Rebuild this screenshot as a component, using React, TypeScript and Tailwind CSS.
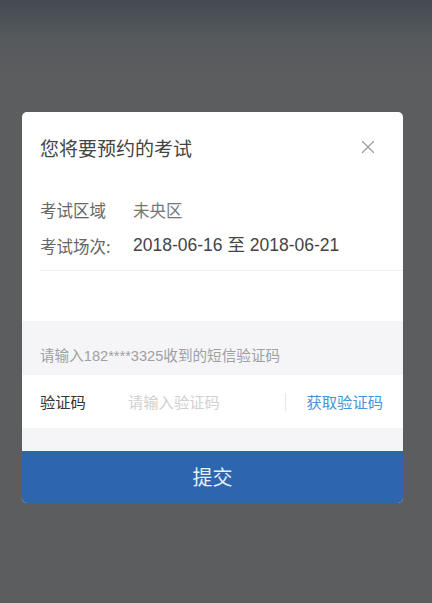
import { X } from "lucide-react";

const font = { fontFamily: '"Noto Sans CJK SC", "Noto Sans", sans-serif' };
const latin = { fontFamily: '"Liberation Sans", "Noto Sans CJK SC", sans-serif' };

export default function App() {
  return (
    <div
      className="flex h-[603px] w-[432px] flex-col bg-[linear-gradient(180deg,#444b53_0px,#575a5d_40px,#5c5d5e_80px)]"
      style={font}
    >
      <div className="ml-[22px] mt-[112px] flex w-[381px] flex-col overflow-hidden rounded-[5px] bg-white">
        {/* header */}
        <div className="flex h-[70px] items-center justify-between pl-[18px] pr-[24px]">
          <span className="text-[19px] leading-none text-[#444]">您将要预约的考试</span>
          <X className="h-[22px] w-[22px] text-[#9a9a9a]" strokeWidth={1.3} />
        </div>

        {/* exam info */}
        <div className="ml-[18px] flex flex-col border-b border-[#f0f0f0] pb-[6px] pt-[10px]">
          <div className="flex h-[36px] items-center text-[16.5px] leading-none">
            <span className="w-[93px] text-[#666]">考试区域</span>
            <span className="text-[#777]">未央区</span>
          </div>
          <div className="flex h-[36px] items-center text-[16.5px] leading-none">
            <span className="w-[93px] text-[#666]">考试场次:</span>
            <span className="text-[17.5px] text-[#444]" style={latin}>
              2018-06-16 至 2018-06-21
            </span>
          </div>
        </div>

        <div className="h-[50px]" />

        {/* hint band */}
        <div className="flex h-[54px] items-end bg-[#f5f5f7] pb-[11px] pl-[18px]">
          <span className="text-[14.6px] leading-none text-[#a0a0a0]" style={latin}>
            请输入182****3325收到的短信验证码
          </span>
        </div>

        {/* code row */}
        <div className="flex h-[53px] items-center pl-[18px] pr-[20px] text-[15.3px] leading-none">
          <span className="w-[88px] text-[#333]">验证码</span>
          <span className="flex-1 text-[#d0d0d0]">请输入验证码</span>
          <span className="mr-[21px] h-[18px] w-px bg-[#e6e6e6]" />
          <span className="text-[#4a92dc]">获取验证码</span>
        </div>

        <div className="h-[23px] bg-[#f5f5f7]" />

        {/* submit */}
        <button className="flex h-[52px] items-center justify-center bg-[#2d66ae] text-[20px] leading-none text-[#e8eef6]">
          提交
        </button>
      </div>
    </div>
  );
}
